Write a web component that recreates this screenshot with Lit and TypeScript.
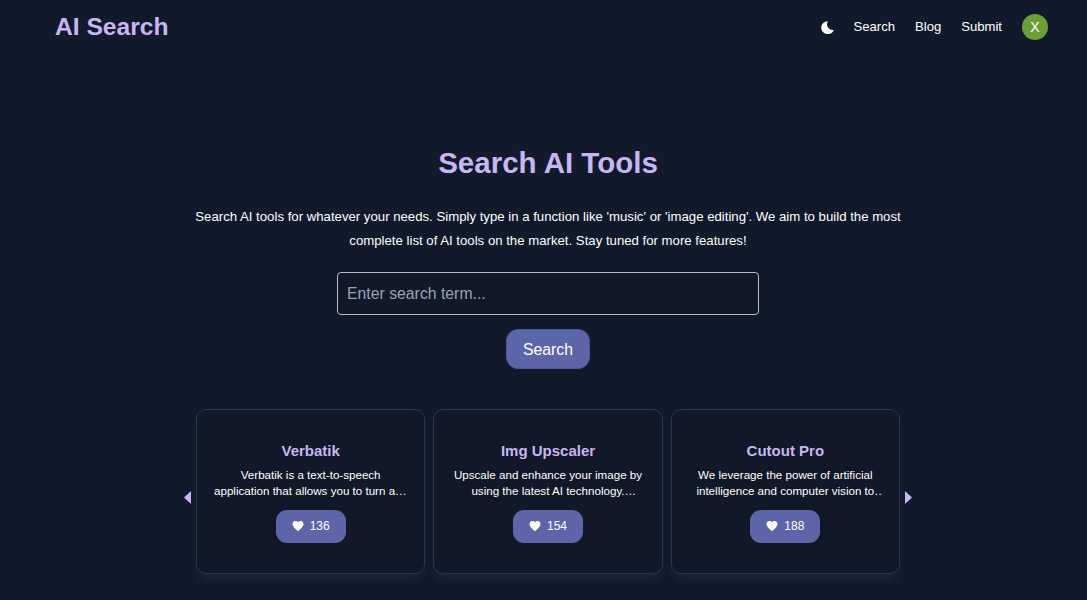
import { customElement } from "lit/decorators.js";
import { css, html, LitElement } from "lit";

const tools = [
  {
    name: "Verbatik",
    text: "Verbatik is a text-to-speech application that allows you to turn any written text into natural sounding voices in seconds.",
    likes: 136,
  },
  {
    name: "Img Upscaler",
    text: "Upscale and enhance your image by using the latest AI technology. Transform your pictures with a single click and no effort.",
    likes: 154,
  },
  {
    name: "Cutout Pro",
    text: "We leverage the power of artificial intelligence and computer vision to deliver a range of visual design tools online.",
    likes: 188,
  },
];

@customElement("app-root")
export class AppRoot extends LitElement {
  static styles = css`
    :host {
      display: block;
      min-height: 600px;
      background: #111a2b;
      color: #fff;
      font-family: "Liberation Sans", Arial, sans-serif;
      overflow: hidden;
    }
    nav {
      display: flex;
      align-items: center;
      justify-content: space-between;
      height: 54px;
      padding: 0 39px 0 55px;
    }
    .logo {
      font-size: 24.6px;
      font-weight: 700;
      color: #c8b6f3;
    }
    .links {
      display: flex;
      align-items: center;
      gap: 20px;
      font-size: 13.1px;
    }
    .links span {
      padding-bottom: 1px;
    }
    .moon {
      display: block;
      width: 13px;
      height: 13px;
    }
    .avatar {
      display: flex;
      align-items: center;
      justify-content: center;
      width: 26px;
      height: 26px;
      border-radius: 50%;
      background: #6a9f38;
      font-size: 14px;
    }
    main {
      display: flex;
      flex-direction: column;
      align-items: center;
      padding: 91px 0 0 9px;
    }
    h1 {
      margin: 0;
      font-size: 29.5px;
      line-height: 36px;
      font-weight: 700;
      color: #c8b6f3;
    }
    .intro {
      width: 710px;
      margin: 24px 0 0;
      font-size: 13.2px;
      line-height: 23.5px;
      text-align: center;
    }
    input {
      box-sizing: border-box;
      width: 422px;
      height: 43px;
      margin-top: 20px;
      padding: 0 9px;
      border: 1px solid #b9bbc1;
      border-radius: 4px;
      outline: none;
      background: #111827;
      color: #fff;
      font: 15.8px "Liberation Sans", Arial, sans-serif;
    }
    input::placeholder {
      color: #9ca3af;
      opacity: 1;
    }
    .search {
      width: 84px;
      height: 40px;
      margin-top: 14px;
      padding: 2px 0 0;
      border: 1px solid #4f5694;
      border-radius: 12px;
      background: #5d65a9;
      color: #fff;
      font: 15.8px "Liberation Sans", Arial, sans-serif;
    }
    .carousel {
      position: relative;
      display: flex;
      gap: 8px;
      width: 704px;
      margin-top: 40px;
    }
    .card {
      box-sizing: border-box;
      display: flex;
      flex-direction: column;
      align-items: center;
      flex: 1;
      height: 165px;
      padding: 32px 16px 0;
      border: 1px solid #2b3647;
      border-radius: 10px;
      background: #111827;
      box-shadow: 0 7px 10px -3px rgba(40, 90, 130, 0.25);
    }
    h2 {
      margin: 0;
      font-size: 15px;
      line-height: 18px;
      font-weight: 700;
      color: #c8b6f3;
    }
    .desc {
      display: -webkit-box;
      -webkit-box-orient: vertical;
      -webkit-line-clamp: 2;
      overflow: hidden;
      margin: 7px 0 0;
      font-size: 11.6px;
      line-height: 16px;
      text-align: center;
    }
    .like {
      box-sizing: border-box;
      display: flex;
      align-items: center;
      justify-content: center;
      gap: 6px;
      width: 70px;
      height: 33px;
      margin-top: 11px;
      padding-bottom: 1px;
      border-radius: 11px;
      background: #5d65a9;
      font-size: 12px;
    }
    .like svg {
      display: block;
      width: 12px;
      height: 12px;
    }
    .arrow {
      position: absolute;
      top: 82px;
      width: 7px;
      height: 13px;
      background: #c8b6f3;
    }
    .prev {
      left: -12px;
      clip-path: polygon(100% 0, 100% 100%, 0 50%);
    }
    .next {
      right: -12px;
      clip-path: polygon(0 0, 100% 50%, 0 100%);
    }
  `;

  render() {
    return html`
      <nav>
        <div class="logo">AI Search</div>
        <div class="links">
          <svg class="moon" viewBox="0 0 16 16" fill="#fff">
            <path d="M8.500.2A8 8 0 1 0 15.800 11 7.200 7.200 0 0 1 8.500.2Z" />
          </svg>
          <span>Search</span>
          <span>Blog</span>
          <span>Submit</span>
          <div class="avatar">X</div>
        </div>
      </nav>
      <main>
        <h1>Search AI Tools</h1>
        <p class="intro">
          Search AI tools for whatever your needs. Simply type in a function like 'music' or 'image editing'. We aim to
          build the most complete list of AI tools on the market. Stay tuned for more features!
        </p>
        <input type="text" placeholder="Enter search term..." />
        <button class="search">Search</button>
        <section class="carousel">
          <div class="arrow prev"></div>
          ${tools.map(
            (tool) => html`
              <article class="card">
                <h2>${tool.name}</h2>
                <p class="desc">${tool.text}</p>
                <div class="like">
                  <svg viewBox="0 0 24 24" fill="#fff">
                    <path d="M12 22.500C5.500 17 1 13 1 8.200 1 4.600 3.800 2 7 2c2 0 3.900 1 5 2.800C13.100 3 15 2 17 2c3.200 0 6 2.600 6 6.200 0 4.800-4.500 8.800-11 14.300Z" />
                  </svg>
                  <span>${tool.likes}</span>
                </div>
              </article>
            `,
          )}
          <div class="arrow next"></div>
        </section>
      </main>
    `;
  }
}
